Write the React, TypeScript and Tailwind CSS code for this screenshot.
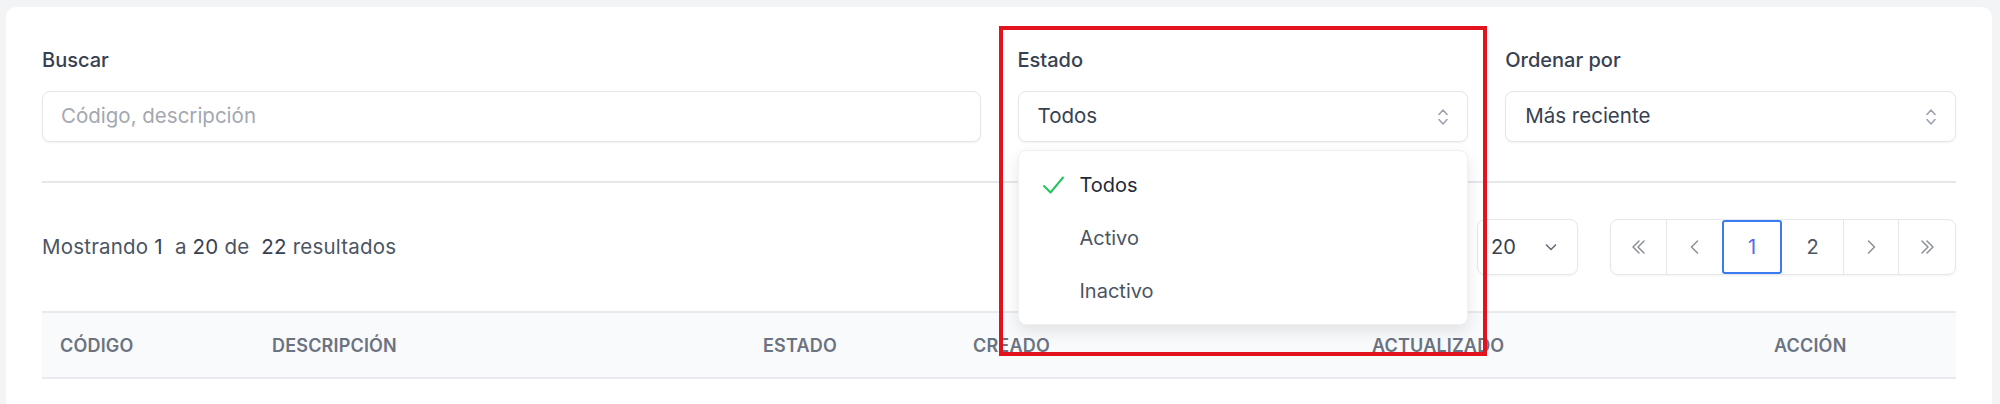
import React from "react";

const UpDown = () => (
  <svg width="16" height="24" viewBox="0 0 16 24" fill="none" stroke="#9ca3af" strokeWidth="1.6" strokeLinecap="round" strokeLinejoin="round">
    <path d="M4 9.5 L8 5 L12 9.5" />
    <path d="M4 14.5 L8 19 L12 14.5" />
  </svg>
);

const ChevDown = () => (
  <svg width="16" height="16" viewBox="0 0 16 16" fill="none" stroke="#6b7280" strokeWidth="1.7" strokeLinecap="round" strokeLinejoin="round">
    <path d="M3.5 6 L8 10.5 L12.5 6" />
  </svg>
);

const Icon = ({ d }: { d: string[] }) => (
  <svg width="20" height="22" viewBox="0 0 20 22" fill="none" stroke="#8b8f97" strokeWidth="1.5" strokeLinecap="round" strokeLinejoin="round">
    {d.map((p, i) => (
      <path key={i} d={p} />
    ))}
  </svg>
);

export default function App() {
  const font = { fontFamily: "Inter, 'Noto Sans', sans-serif" };
  return (
    <div className="relative h-[404px] w-[2000px] overflow-hidden bg-[#f3f4f6] pl-[6px] pr-[8px] pt-[7px]" style={font}>
      <div className="h-[500px] rounded-[10px] bg-white px-[36px] pt-[39px]">
        {/* Filters */}
        <div className="grid grid-cols-4 gap-x-[37px]">
          <div className="col-span-2">
            <div className="mb-[17px] text-[20px] leading-[28px] font-medium text-[#374151]">Buscar</div>
            <div className="flex h-[51px] items-center rounded-[8px] border border-[#e5e7eb] bg-white px-[18px] text-[20.5px] text-[#a3a8b1] shadow-[0_1px_2px_rgba(0,0,0,0.06)]">
              Código, descripción
            </div>
          </div>
          <div className="relative">
            <div className="mb-[17px] text-[20px] leading-[28px] font-medium text-[#374151]">Estado</div>
            <div className="flex h-[51px] items-center justify-between rounded-[8px] border border-[#e5e7eb] bg-white pl-[19px] pr-[16px] text-[20.5px] text-[#374151] shadow-[0_1px_2px_rgba(0,0,0,0.06)]">
              <span>Todos</span>
              <UpDown />
            </div>
            <div className="absolute left-0 right-0 top-[104px] z-10 rounded-[8px] border border-[#f0f1f3] bg-white py-[7px] shadow-[0_6px_16px_rgba(0,0,0,0.10)]">
              <div className="flex h-[53px] items-center text-[20px] text-[#1f2937]">
                <span className="flex w-[61px] justify-end pr-[15px]">
                  <svg width="23" height="20" viewBox="0 0 23 20" fill="none" stroke="#22c55e" strokeWidth="2" strokeLinecap="round" strokeLinejoin="round">
                    <path d="M2 11 L8.5 17.5 L21 2.5" />
                  </svg>
                </span>
                <span>Todos</span>
              </div>
              <div className="flex h-[53px] items-center pl-[61px] text-[20px] text-[#4b5563]">Activo</div>
              <div className="flex h-[53px] items-center pl-[61px] text-[20px] text-[#4b5563]">Inactivo</div>
            </div>
          </div>
          <div>
            <div className="mb-[17px] text-[20px] leading-[28px] font-medium text-[#374151]">Ordenar por</div>
            <div className="flex h-[51px] items-center justify-between rounded-[8px] border border-[#e5e7eb] bg-white pl-[19px] pr-[16px] text-[20.5px] text-[#374151] shadow-[0_1px_2px_rgba(0,0,0,0.06)]">
              <span>Más reciente</span>
              <UpDown />
            </div>
          </div>
        </div>

        <div className="mt-[39px] h-[2px] bg-[#e5e7eb]" />

        {/* Results row */}
        <div className="mt-[36px] flex h-[56px] items-center justify-between">
          <div className="text-[20.5px] tracking-[0.01em] text-[#4b5563]">
            Mostrando <span className="text-[#374151]">1</span>
            <span className="ml-[12px]">a </span>
            <span className="text-[#374151]">20</span> de
            <span className="ml-[12px] text-[#374151]">22</span> resultados
          </div>
          <div className="flex items-center gap-[32px]">
            <div className="flex h-[56px] w-[101px] items-center justify-between rounded-[8px] border border-[#e5e7eb] pl-[13px] pr-[18px] text-[20px] text-[#374151] shadow-[0_1px_2px_rgba(0,0,0,0.05)]">
              <span>20</span>
              <ChevDown />
            </div>
            <div className="flex h-[56px] overflow-hidden rounded-[8px] border border-[#e5e7eb] shadow-[0_1px_2px_rgba(0,0,0,0.05)]">
              <div className="flex w-[56px] items-center justify-center border-r border-[#e5e7eb]">
                <Icon d={["M10 5 L4 11 L10 17", "M15 5 L9 11 L15 17"]} />
              </div>
              <div className="flex w-[55px] items-center justify-center">
                <Icon d={["M12.5 5 L6.5 11 L12.5 17"]} />
              </div>
              <div className="flex w-[60px] items-center justify-center rounded-[3px] border-2 border-[#3b7bf0] text-[20px] text-[#5468e8]">1</div>
              <div className="flex w-[62px] items-center justify-center border-r border-[#e5e7eb] text-[20px] text-[#4b5563]">2</div>
              <div className="flex w-[55px] items-center justify-center border-r border-[#e5e7eb]">
                <Icon d={["M7.5 5 L13.5 11 L7.5 17"]} />
              </div>
              <div className="flex w-[56px] items-center justify-center">
                <Icon d={["M5 5 L11 11 L5 17", "M10 5 L16 11 L10 17"]} />
              </div>
            </div>
          </div>
        </div>

        {/* Table header */}
        <div className="mt-[36px] grid h-[68px] grid-cols-[212px_491px_210px_399px_402px_1fr] items-center border-y-2 border-[#e9eaee] bg-[#f9fafb] text-[18px] font-semibold uppercase tracking-[0.01em] text-[#6b7280]">
          <div className="pl-[18px]">Código</div>
          <div className="pl-[18px]">Descripción</div>
          <div className="pl-[18px]">Estado</div>
          <div className="pl-[18px]">Creado</div>
          <div className="pl-[18px]">Actualizado</div>
          <div className="pl-[18px]">Acción</div>
        </div>
      </div>

      {/* Annotation box */}
      <div className="pointer-events-none absolute left-[999px] top-[26px] z-20 h-[330px] w-[488px] border-[4px] border-[#e3131e]" />
    </div>
  );
}
